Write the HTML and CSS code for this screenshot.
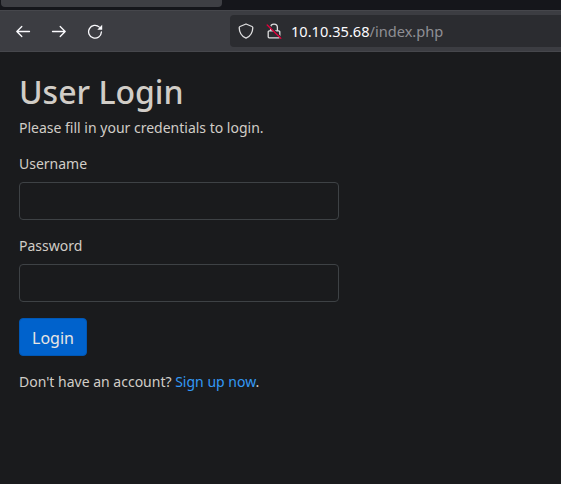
FILE: index.html
```html
<!DOCTYPE html>
<html lang="en">
<head>
<meta charset="utf-8">
<title>Login</title>
<link rel="stylesheet" href="styles.css">
</head>
<body>
<div class="tabs"><div class="tab"></div></div>
<header class="toolbar">
  <nav class="nav">
    <svg class="icon" width="16" height="16" viewBox="0 0 16 16"><path d="M14.500 8.500H1.800M6.800 3.500l-5 5 5 5"/></svg>
    <svg class="icon" width="16" height="16" viewBox="0 0 16 16"><path d="M1.500 8.500H14.200M9.200 3.500l5 5-5 5"/></svg>
    <svg class="icon" width="16" height="16" viewBox="0 0 16 16"><path d="M14.400 9A6.400 6.400 0 1 1 12.400 4.100"/><path class="solid" d="M15.200 1.800v4.900h-4.900z"/></svg>
  </nav>
  <div class="urlbar">
    <svg class="icon shield" width="16" height="16" viewBox="0 0 16 16"><path d="M8 1l6 2.500c.6.300.8.600.8 1.200C14.700 9.800 12.200 13.300 8 15.200 3.800 13.300 1.300 9.800 1.200 4.700c0-.6.200-.9.800-1.200z"/></svg>
    <svg class="icon lock" width="16" height="16" viewBox="0 0 16 16"><path d="M4.600 7.900V4.600a3.400 3.400 0 0 1 6.800 0v3.300M3.200 7.900h9.600a1 1 0 0 1 1 1v4.900a1 1 0 0 1-1 1H3.200a1 1 0 0 1-1-1V8.900a1 1 0 0 1 1-1z"/><path class="gap" d="M2.400 1.700l13 13"/><path class="slash" d="M1.200 2l13.600 13.300"/></svg>
    <span class="url">10.10.35.68<span class="path">/index.php</span></span>
  </div>
</header>
<main class="wrapper">
  <h2>User Login</h2>
  <p>Please fill in your credentials to login.</p>
  <form>
    <div class="form-group"><label for="user">Username</label><input id="user" type="text"></div>
    <div class="form-group"><label for="pass">Password</label><input id="pass" type="password"></div>
    <div class="form-group"><button type="button">Login</button></div>
    <p>Don't have an account? <a href="#">Sign up now</a>.</p>
  </form>
</main>
</body>
</html>
```
FILE: styles.css
```css
* { box-sizing: border-box; }
body {
  margin: 0;
  height: 484px;
  overflow: hidden;
  background: #1a1b1d;
  color: #d1cdc7;
  font: 14px/20px "Noto Sans", sans-serif;
}
.tabs { height: 10px; padding-left: 1px; background: #15161b; }
.tab { width: 221px; height: 7px; background: #3e3f44; border-radius: 0 0 4px 4px; }
.toolbar {
  display: flex;
  align-items: center;
  height: 42px;
  background: #3c3d42;
  border-top: 1px solid #46474c;
  border-bottom: 1px solid #46474c;
}
.nav { display: flex; gap: 20px; width: 230px; padding-left: 15px; }
.icon { display: block; flex: none; fill: none; stroke: #fbfbfe; stroke-width: 1.3; stroke-linecap: round; stroke-linejoin: round; }
.icon .solid { fill: #fbfbfe; stroke: none; }
.icon .gap { stroke: #2b2c30; stroke-width: 1.5; }
.icon .slash { stroke: #e2003c; }
.urlbar {
  display: flex;
  align-items: center;
  flex: 1;
  height: 32px;
  padding-left: 8px;
  background: #2b2c30;
  border-radius: 4px 0 0 4px;
}
.shield, .lock { stroke: #dededf; }
.lock { margin-left: 12px; }
.url { margin-left: 9px; font-size: 14.6px; color: #fbfbfe; white-space: nowrap; }
.path { color: #8f8f94; }
.wrapper { width: 358px; padding: 22px 19px; }
h2 { margin: 0 0 9px; font-size: 32px; line-height: 35px; font-weight: 500; }
p { margin: 0 0 16px; }
.form-group { margin-bottom: 16px; }
label { display: block; margin-bottom: 8px; }
input {
  display: block;
  width: 100%;
  height: 38px;
  padding: 6px 12px;
  background: #1a1b1d;
  color: inherit;
  border: 1px solid #3e4245;
  border-radius: 4px;
}
button {
  display: block;
  height: 38px;
  padding: 2px 12px 0;
  font: 16px/24px "Noto Sans", sans-serif;
  color: #e8e6e3;
  background: #0062cc;
  border: 1px solid #0057b5;
  border-radius: 4px;
}
a { color: #3399f5; text-decoration: none; }
```
